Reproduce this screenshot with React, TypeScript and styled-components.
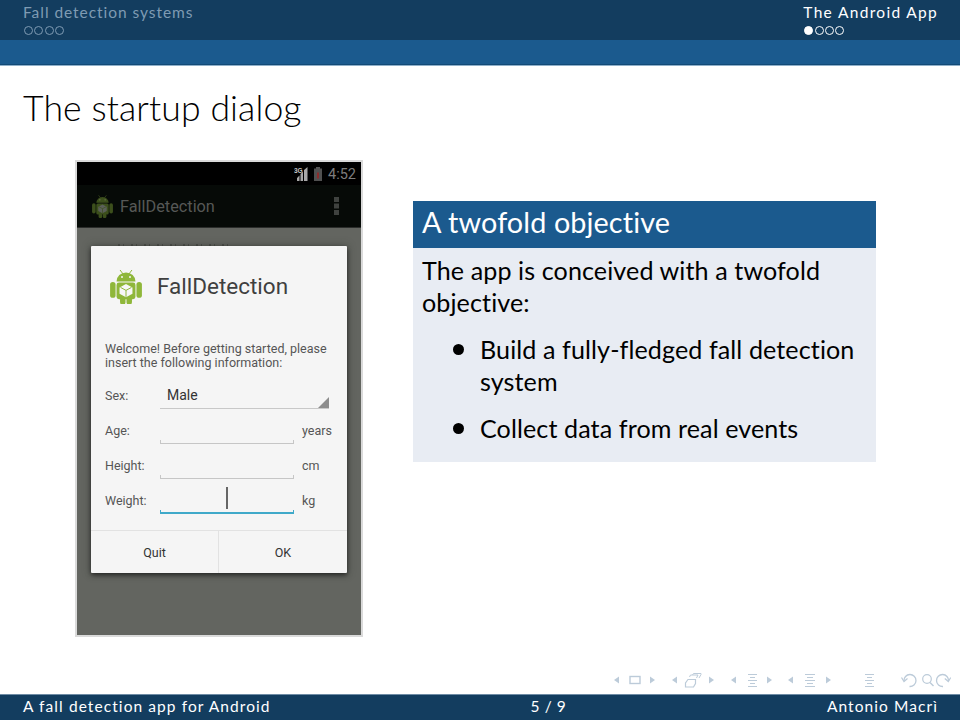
import React from "react";
import styled, { createGlobalStyle } from "styled-components";

const Global = createGlobalStyle`
  html, body { margin: 0; padding: 0; background: #fff; }
  #root { width: 960px; height: 720px; overflow: hidden; }
`;
const SANS = `"Lato", "Open Sans", sans-serif`;
const DROID = `"Roboto", "Noto Sans", sans-serif`;

const Slide = styled.div`
  width: 960px; height: 720px; display: flex; flex-direction: column;
  font-family: ${SANS}; color: #000; background: #fff; font-variant-ligatures: none;
`;
const Header = styled.header`
  height: 40px; background: #133d5f; display: flex; justify-content: space-between;
  padding: 3px 22px 0 23px; box-sizing: border-box;
`;
const Section = styled.div<{ $right?: boolean }>`
  display: flex; flex-direction: column; align-items: flex-start;
  color: ${p => (p.$right ? "#fff" : "#7f9bb3")};
  font-size: 15.5px; line-height: 18px; letter-spacing: ${p => (p.$right ? "1.32px" : "0.95px")}; gap: 5px;
`;
const Dots = styled.div`display: flex; gap: 1.3px; padding-left: 1px;`;
const Dot = styled.span<{ $on?: boolean; $dim?: boolean }>`
  width: 7px; height: 7px; border-radius: 50%; border: 1px solid ${p => (p.$dim ? "#7f9bb3" : "#fff")};
  background: ${p => (p.$on ? "#fff" : "transparent")};
`;
const Band = styled.div`height: 25px; background: #1b5a8e; box-shadow: inset 0 -1px 0 #134a76; border-bottom: 1px solid #8fb0ca;`;
const FrameTitle = styled.h1`
  margin: 0; padding: 20px 0 0 23px; height: 46px; font-weight: 300; font-size: 35.6px; line-height: 44px; color: #000; letter-spacing: 0.1px;
`;
const Content = styled.main`
  flex: 1; display: flex; align-items: flex-start; padding: 28px 84px 0 75px; gap: 50px;
`;
const Phone = styled.div`
  width: 288px; height: 477px; box-sizing: border-box; flex: none; border: 2px solid #dadada; background: #636560;
  display: flex; flex-direction: column;
`;
const StatusBar = styled.div`
  height: 23px; flex: none; background: #000; display: flex; align-items: center; justify-content: flex-end;
  gap: 6px; padding: 1px 5px 0 0; box-sizing: border-box; color: #7d7d7d; font-family: ${DROID}; font-size: 14.5px;
`;
const ActionBar = styled.div`
  height: 43px; flex: none; box-sizing: border-box; background: #060a07; border-bottom: 1px solid #2b2d2b; display: flex; align-items: center;
  padding: 0 22px 0 15px; color: #565856; font-family: ${DROID}; font-size: 16.3px; gap: 7px;
`;
const ActionTitle = styled.span`flex: 1;`;
const Scrim = styled.div`
  flex: 1; padding: 18px 14px 0; display: flex; flex-direction: column; position: relative;
  &::before { content: ""; position: absolute; left: 41px; top: 16px; width: 112px; height: 2px; opacity: .4;
    background: repeating-linear-gradient(90deg, #2c2e2b 0 2px, transparent 2px 5px, #2c2e2b 5px 6px, transparent 6px 13px); }
`;
const Dialog = styled.div`
  height: 327px; background: #f5f5f5; border-radius: 1px; display: flex; flex-direction: column; position: relative;
  box-shadow: 0 2px 5px rgba(0,0,0,.6), 0 0 10px rgba(40,45,40,.35); color: #555;
  font-family: ${DROID};
`;
const DialogHead = styled.div`
  height: 80px; flex: none; display: flex; align-items: center; padding: 0 0 0 19px; gap: 15px;
  font-size: 22.5px; color: #3f3f3f; box-sizing: border-box;
`;
const Message = styled.p`
  margin: 16px 0 0; padding: 0 14px; font-size: 12.5px; line-height: 14px; height: 28px;
`;
const Rows = styled.div`display: flex; flex-direction: column; margin-top: 8px;`;
const Row = styled.div`
  height: 35px; display: grid; grid-template-columns: 47px 134px auto; column-gap: 8px;
  align-items: center; padding-left: 14px; font-size: 12.5px;
`;
const SpinnerRow = styled(Row)`grid-template-columns: 47px 169px;`;
const Spinner = styled.div`
  height: 25px; border-bottom: 1px solid #c8c8c8; position: relative; display: flex; align-items: center;
  padding: 0 0 2px 7px; box-sizing: border-box; font-size: 14px; color: #333; margin-top: 1px;
  &::after { content: ""; position: absolute; right: 0; bottom: 0; width: 0; height: 0;
    border-left: 11px solid transparent; border-bottom: 11px solid #8d8d8d; }
`;
const Input = styled.div<{ $focus?: boolean }>`
  height: 4px; align-self: end; margin-bottom: 4px; box-sizing: border-box; position: relative;
  border-style: solid; border-color: ${p => (p.$focus ? "#3fa9c9" : "#c6c6c6")};
  border-width: 0 1px ${p => (p.$focus ? "2px" : "1px")} 1px;
  &::before { content: ""; display: ${p => (p.$focus ? "block" : "none")}; position: absolute; left: 65px; bottom: 3px;
    width: 1.5px; height: 22px; background: #666; }
`;
const Buttons = styled.div`
  margin-top: auto; height: 43px; border-top: 1px solid #e2e2e2; display: grid; grid-template-columns: 128px 1fr;
  font-size: 12.5px; color: #333; box-sizing: border-box;
`;
const Btn = styled.div<{ $divider?: boolean }>`
  display: flex; align-items: center; justify-content: center;
  border-right: ${p => (p.$divider ? "1px solid #e2e2e2" : "0")};
`;
const Block = styled.section`
  width: 463px; margin-top: 41px; flex: none; background: #e8ecf3; height: 261px;
  display: flex; flex-direction: column;
`;
const BlockTitle = styled.h2`
  margin: 0; height: 47px; flex: none; background: #1b5a8e; color: #fff; font-weight: 400; font-size: 28.8px; line-height: 42px;
  padding: 0 0 5px 9px; box-sizing: border-box; letter-spacing: 0.1px;
`;
const BlockBody = styled.div`padding: 6px 9px 0; font-size: 25.1px; line-height: 32px; letter-spacing: 0.1px;`;
const Intro = styled.p`margin: 0;`;
const List = styled.ul`margin: 15px 0 0; padding: 0 0 0 58px; list-style: none; display: flex; flex-direction: column; gap: 15px;`;
const Item = styled.li`
  position: relative;
  &::before { content: ""; position: absolute; left: -27px; top: 11px; width: 11px; height: 11px; border-radius: 50%; background: #000; }
`;
const NavRow = styled.div`height: 29px; box-sizing: border-box; display: flex; justify-content: flex-end; padding: 3px 9px 0 0; align-items: flex-start;`;
const Footer = styled.footer`
  background: #133d5f; color: #fff; border-top: 1px solid #6f8ca5; display: flex; justify-content: space-between;
  padding: 0 22px 3px 23px; align-items: center; font-size: 15.5px; letter-spacing: 1.08px; box-sizing: border-box; margin-top: -1px; height: 26px;
`;
const PageNo = styled.span`word-spacing: -1px;`;

const Droid = ({ size, dim }: { size: number; dim?: boolean }) => {
  const g = dim ? "#3c4f1c" : "#8fb73a";
  const cube = dim ? "#5b605a" : "#f7f7f7";
  return (
    <svg width={size} height={size * 1.15} viewBox="0 0 32 37">
      <path d="M10 2l3 4M22 2l-3 4" stroke={g} strokeWidth="1" />
      <path d="M6.500 13.500a9.500 9 0 0 1 19 0z" fill={g} />
      <circle cx="12" cy="9" r="1" fill="#f5f5f5" opacity={dim ? 0.3 : 1} />
      <circle cx="20" cy="9" r="1" fill="#f5f5f5" opacity={dim ? 0.3 : 1} />
      <rect x="0" y="14" width="5.500" height="16" rx="2.700" fill={g} />
      <rect x="26.500" y="14" width="5.500" height="16" rx="2.700" fill={g} />
      <rect x="6.500" y="14.500" width="19" height="17" rx="2.500" fill={g} />
      <rect x="10" y="29" width="5.500" height="8" rx="2.700" fill={g} />
      <rect x="16.500" y="29" width="5.500" height="8" rx="2.700" fill={g} />
      <path d="M16 16l6.500 3.500v6.500L16 29.500 9.500 26v-6.500z" fill={cube} />
      <path d="M16 22.500l-5.500-3M16 22.500l5.500-3M16 22.500v6.500" stroke={g} strokeWidth="1" fill="none" />
    </svg>
  );
};

const Signal = () => (
  <svg width="14" height="14" viewBox="0 0 14 14">
    <path d="M13.500 0v14H10V3zM9 4.500V14H6.500V7zM5.500 8.500V14H3v-3z" fill="#a8a8a8" />
    <text x="0" y="5.500" fontSize="6.500" fill="#c4c4c4" fontFamily="Liberation Sans" fontWeight="700">3G</text>
  </svg>
);
const Battery = () => (
  <svg width="8" height="14" viewBox="0 0 8 14">
    <rect x="2" y="0" width="4" height="2" fill="#555" />
    <rect x="0" y="1.500" width="8" height="12.500" fill="#505050" />
    <rect x="3" y="5.500" width="2" height="6" fill="#8a2c2c" />
  </svg>
);
const Overflow = () => (
  <svg width="5" height="18" viewBox="0 0 5 18">
    <rect y="0" width="5" height="5" fill="#3f423f" />
    <rect y="6.500" width="5" height="5" fill="#3f423f" />
    <rect y="13" width="5" height="5" fill="#3f423f" />
  </svg>
);

const NAV = "#bccbd9";
const Arrow = ({ x, left }: { x: number; left?: boolean }) => (
  <path d={left ? `M${x + 5} 7.500l-5 3.500 5 3.500z` : `M${x} 7.500l5 3.500-5 3.500z`} fill={NAV} />
);
const Lines = ({ x, w }: { x: number; w: number }) => (
  <g stroke={NAV} strokeWidth="1">
    <path d={`M${x} 5.500h${w}`} />
    <path d={`M${x + 2} 8.500h${w - 4}`} />
    <path d={`M${x} 11.500h${w}`} />
    <path d={`M${x + 2} 14.500h${w - 4}`} />
    <path d={`M${x} 17.500h${w}`} />
  </g>
);
const NavSymbols = () => (
  <svg width="341" height="22" viewBox="0 0 341 22" fill="none">
    <Arrow x={4} left />
    <rect x="20" y="7.500" width="10" height="7" stroke={NAV} strokeWidth="1.400" />
    <Arrow x={40} />
    <Arrow x={62} left />
    <path d="M78 10.500h7.500v4l-2 3.500H75.500v-4z" stroke={NAV} strokeWidth="1.200" />
    <path d="M79.500 8l1-2H88l-1.500 3M82.500 6l1-1.500H91v1L89 9" stroke={NAV} strokeWidth="1" />
    <Arrow x={99} />
    <Arrow x={121} left />
    <Lines x={138} w={9} />
    <Arrow x={157} />
    <Arrow x={178} left />
    <Lines x={195} w={10} />
    <Arrow x={216} />
    <Lines x={255} w={9} />
    <path d="M294 12a6 6 0 1 1 5.500 5.500" stroke={NAV} strokeWidth="1.300" />
    <path d="M291.500 8.500l2.500 4 3.500-3" stroke={NAV} strokeWidth="1.200" />
    <circle cx="317" cy="10" r="4.300" stroke={NAV} strokeWidth="1.200" />
    <path d="M320 13.500l3.500 3.500" stroke={NAV} strokeWidth="1.400" />
    <path d="M338.500 12a6 6 0 1 0-5.500 5.500" stroke={NAV} strokeWidth="1.300" />
    <path d="M340.800 8.500l-2.500 4-3.500-3" stroke={NAV} strokeWidth="1.200" />
  </svg>
);

export default function App() {
  return (
    <Slide>
      <Global />
      <Header>
        <Section>
          Fall detection systems
          <Dots>{[0, 1, 2, 3].map(i => <Dot key={i} $dim />)}</Dots>
        </Section>
        <Section $right>
          The Android App
          <Dots>{[0, 1, 2, 3].map(i => <Dot key={i} $on={i === 0} />)}</Dots>
        </Section>
      </Header>
      <Band />
      <FrameTitle>The startup dialog</FrameTitle>
      <Content>
        <Phone>
          <StatusBar><Signal /><Battery /><span>4:52</span></StatusBar>
          <ActionBar>
            <Droid size={21} dim />
            <ActionTitle>FallDetection</ActionTitle>
            <Overflow />
          </ActionBar>
          <Scrim>
            <Dialog>
              <DialogHead><Droid size={32} />FallDetection</DialogHead>
              <Message>Welcome! Before getting started, please insert the following information:</Message>
              <Rows>
                <SpinnerRow><span>Sex:</span><Spinner>Male</Spinner></SpinnerRow>
                <Row><span>Age:</span><Input /><span>years</span></Row>
                <Row><span>Height:</span><Input /><span>cm</span></Row>
                <Row><span>Weight:</span><Input $focus /><span>kg</span></Row>
              </Rows>
              <Buttons><Btn $divider>Quit</Btn><Btn>OK</Btn></Buttons>
            </Dialog>
          </Scrim>
        </Phone>
        <Block>
          <BlockTitle>A twofold objective</BlockTitle>
          <BlockBody>
            <Intro>The app is conceived with a twofold objective:</Intro>
            <List>
              <Item>Build a fully-fledged fall detection system</Item>
              <Item>Collect data from real events</Item>
            </List>
          </BlockBody>
        </Block>
      </Content>
      <NavRow><NavSymbols /></NavRow>
      <Footer>
        <span>A fall detection app for Android</span>
        <PageNo>5 / 9</PageNo>
        <span>Antonio Macrì</span>
      </Footer>
    </Slide>
  );
}
